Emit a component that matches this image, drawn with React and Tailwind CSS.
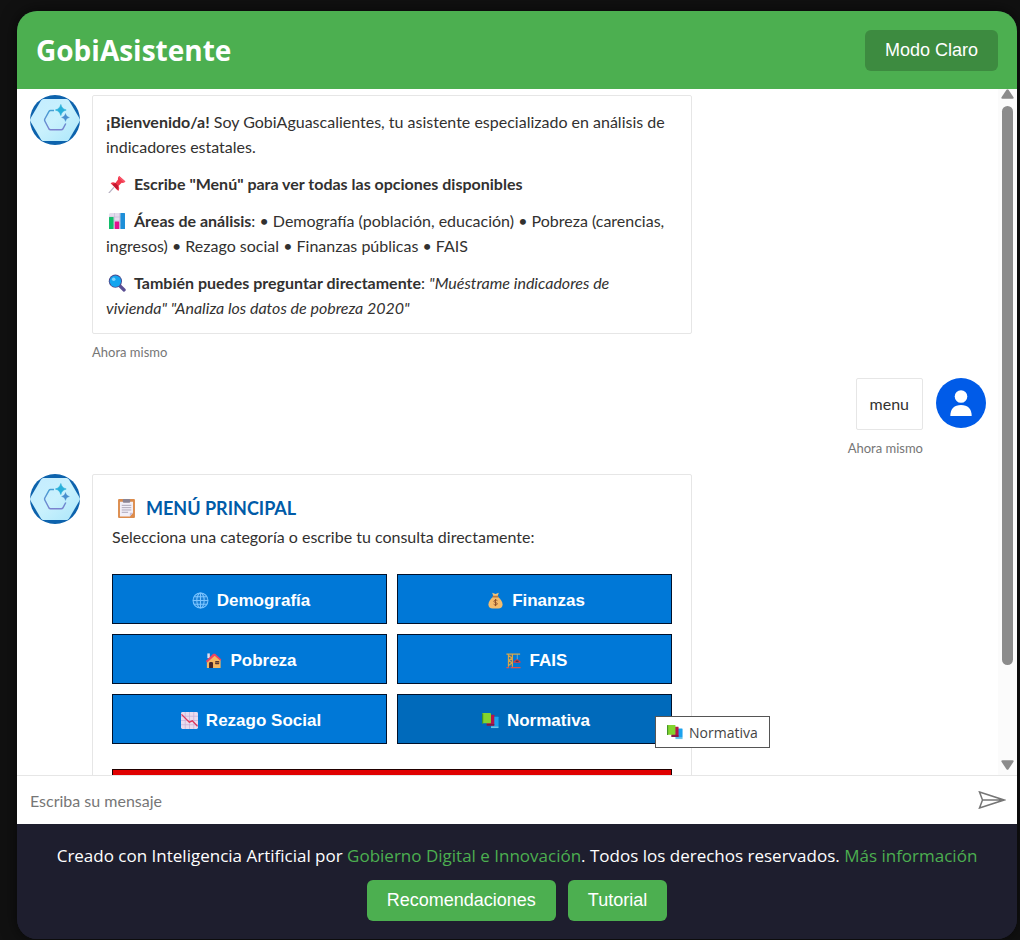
import React from "react";

const emojiArt = {
  pin: (
    <>
      <path d="M5.6 12.6 1 18" stroke="#b9b4c4" strokeWidth="1.2" strokeLinecap="round" />
      <path d="M2.6 8.2c1.9-1.3 3.3-1 4.8-.2l2.6-3.4c-.3-1.4.2-2.8 1.2-3.6L17.4 6.6c-.9 1-2.3 1.5-3.700 1.200L10.500 11c.9 1.600 1.100 3.300-.2 4.900Z" fill="#f0384c" />
      <path d="m7.400 8 3 3-1 4L4.500 9.500Z" fill="#c2182f" />
      <path d="m11.200 1 6.200 5.600-1.500.9-5.300-5Z" fill="#f8566b" />
    </>
  ),
  bars: (
    <>
      <rect x="1" y="1" width="16" height="16" rx="1.500" fill="#e4dced" />
      <path d="M1 5h16M1 9h16M1 13h16M6.500 1v16M11.500 1v16" stroke="#c5b8d6" strokeWidth=".6" />
      <rect x="1" y="5" width="4.600" height="12" rx=".6" fill="#12bd6b" />
      <rect x="6.800" y="9.500" width="4.400" height="7.500" rx=".6" fill="#e3108d" />
      <rect x="12.400" y="1" width="4.600" height="16" rx=".6" fill="#1e8fd8" />
    </>
  ),
  lens: (
    <>
      <path d="m11.500 11.500 4.600 4.500" stroke="#5b4f93" strokeWidth="3.200" strokeLinecap="round" />
      <circle cx="7.400" cy="7.200" r="6.600" fill="#4c4a8e" />
      <circle cx="7.400" cy="7.200" r="5.700" fill="#13a5ef" />
      <circle cx="5.700" cy="5.200" r="1.800" fill="#7ed3fb" />
    </>
  ),
  clipboard: (
    <>
      <path d="M2 0h14q1 0 1 1v16q0 1-1 1H2q-1 0-1-1V1q0-1 1-1Z" fill="#dc8b4b" />
      <path d="M2.800 2.500h12.400v10.500l-3 3.500H2.800Z" fill="#f2eff8" />
      <path d="M15.200 13h-3v3.500Z" fill="#c9bfd8" />
      <rect x="5.500" y="0" width="7" height="3.500" rx="1" fill="#8a8494" />
      <path d="M4.500 6h9M4.500 8.200h9M4.500 10.400h9M4.500 12.600h6" stroke="#aaa4b6" strokeWidth=".9" />
    </>
  ),
  globe: (
    <g fill="none" stroke="#7cc5ff" strokeWidth="1.100">
      <circle cx="9" cy="9" r="7.900" fill="#1a80d6" />
      <ellipse cx="9" cy="9" rx="3.900" ry="7.900" />
      <path d="M9 1v16M1 9h16M2.400 5h13.200M2.400 13h13.200" />
    </g>
  ),
  money: (
    <>
      <path d="M5.500.8 9 2l3.500-1.200-1.300 3.700H6.800Z" fill="#f3c37b" />
      <path d="M6.500 5h5c2.900 2.300 5 5.200 5 8.200 0 2.600-1.800 4.300-4.500 4.300H6c-2.700 0-4.500-1.700-4.500-4.300 0-3 2.100-5.900 5-8.200Z" fill="#f5bc6c" />
      <rect x="5.800" y="4" width="6.400" height="1.700" rx=".8" fill="#b9783f" />
      <path d="M11 9.200c-.5-.8-3.700-1-3.700.7 0 1.800 3.600.8 3.600 2.600 0 1.700-3.300 1.500-3.900.4M9 7.400v7.500" fill="none" stroke="#8c4f2b" strokeWidth="1" />
    </>
  ),
  house: (
    <>
      <rect x="2.500" y="1.500" width="2.600" height="5" fill="#e6dceb" />
      <path d="m10.500 3 6 5.500V17H2V9Z" fill="#f6b862" />
      <path d="M1 9.600 8.700 1.800h2L17.300 8l-1.100 1.200-6-5.200-7.900 7Z" fill="#ef4360" />
      <path d="M4.300 17v-5.500c0-1.200 4.200-1.200 4.200 0V17Z" fill="#46272c" />
      <rect x="10.700" y="9.500" width="4.300" height="3.400" rx=".5" fill="#553533" />
      <path d="M10.700 11.200H15" stroke="#c98843" strokeWidth=".7" />
    </>
  ),
  crane: (
    <>
      <path d="M4.600 3h2.900v12H4.600Z" fill="#66737b" opacity=".8" />
      <path d="M1.500 2.200H16M3.600 2v13.500M7.900 2v13.500M4 4l3.500 2.500L4 9l3.500 2.500L4 14" fill="none" stroke="#d8a748" strokeWidth="1.200" />
      <path d="M13 2.500V8" stroke="#7cc0d6" strokeWidth=".8" />
      <path d="m9 10 3.700-2.700L16.500 10v1.500H9Z" fill="#e5383f" />
      <rect x="11.300" y="9" width="3" height="1.600" fill="#493b4e" />
      <path d="M1.500 16.500h3M6 16.500h10.500" stroke="#e4504c" strokeWidth="1.200" />
    </>
  ),
  decline: (
    <>
      <rect x="0" y="0" width="18" height="18" rx="1.500" fill="#e9dcee" />
      <path d="M0 4.500h18M0 9h18M0 13.500h18M4.500 0v18M9 0v18M13.500 0v18" stroke="#c8b1d8" strokeWidth=".8" />
      <path d="m.5 2.500 8.300 8.300L12 9.300l5.500 5.700" fill="none" stroke="#dc365b" strokeWidth="1.400" />
    </>
  ),
  books: (
    <>
      <rect x="9.500" y="5" width="8" height="10.500" rx=".5" fill="#1ba2ee" />
      <path d="M9.500 15.300h8V17h-8Z" fill="#6bc5e8" />
      <rect x="5" y="3" width="8" height="11.500" rx=".5" fill="#b5144a" />
      <path d="M5 12.800h8v1.500H5Z" fill="#6c214b" />
      <rect x="0" y="1" width="9.500" height="11" rx=".5" fill="#83d42e" />
      <path d="M0 1.500h1.300v11H0Z" fill="#43942a" />
    </>
  ),
};

function Emoji({ name, className }) {
  return (
    <svg viewBox="0 0 18 18" fill="none" aria-hidden="true" className={className}>
      {emojiArt[name]}
    </svg>
  );
}

function InlineEmoji({ name }) {
  return <Emoji name={name} className="mr-2 ml-0.5 inline size-[18px] align-[-3px]" />;
}

function BotAvatar() {
  return (
    <svg viewBox="0 0 50 50" aria-hidden="true" className="size-[50px] shrink-0">
      <defs>
        <clipPath id="avatar-clip">
          <circle cx="25" cy="25" r="25" />
        </clipPath>
        <linearGradient id="hex-fill" x1="0" y1="0" x2="1" y2="1">
          <stop offset="0" stopColor="#c4ecff" />
          <stop offset=".5" stopColor="#c9f1fd" />
          <stop offset="1" stopColor="#abe6fa" />
        </linearGradient>
        <linearGradient id="hex-line" x1="0" y1="0" x2="0" y2="1">
          <stop offset="0" stopColor="#469fd4" />
          <stop offset="1" stopColor="#7b83cf" />
        </linearGradient>
      </defs>
      <g clipPath="url(#avatar-clip)">
        <rect width="50" height="50" fill="#0d63ad" />
        <path d="M13.500 4h23q1.600 0 2.500 1.500L49.700 23.700q.6 1.300 0 2.600L39 44.500q-.9 1.500-2.500 1.500h-23q-1.600 0-2.500-1.500L.3 26.300q-.6-1.300 0-2.600L11 5.500Q11.900 4 13.500 4Z" fill="url(#hex-fill)" />
        <path d="M24 15.500h-3.500q-1 0-1.500.8L14.800 24q-.5 1 0 2l4.200 8q.5.800 1.500.8h10.800q1 0 1.500-.8l3-5.500" fill="none" stroke="url(#hex-line)" strokeWidth="1.500" />
        <path d="M30.800 9.500c1.200 3.500 2 4.300 5.400 5.500-3.400 1.200-4.200 2-5.400 5.500-1.200-3.500-2-4.300-5.400-5.500 3.400-1.200 4.200-2 5.400-5.500Z" fill="#28b0da" stroke="#28b0da" strokeWidth=".6" />
        <path d="M35.500 18.500c.8 2.500 1.400 3.100 3.900 4-2.500.8-3.100 1.400-3.900 3.900-.8-2.500-1.400-3.100-3.900-3.900 2.500-.9 3.100-1.500 3.900-4Z" fill="#4a8fcf" stroke="#4a8fcf" strokeWidth=".4" />
      </g>
    </svg>
  );
}

function UserAvatar() {
  return (
    <svg viewBox="0 0 50 50" aria-hidden="true" className="size-[50px] shrink-0">
      <circle cx="25" cy="25" r="25" fill="#005be8" />
      <circle cx="25" cy="18.500" r="6.300" fill="#fff" />
      <path d="M14.300 38c0-7.200 4-11 10.700-11s10.700 3.800 10.700 11Z" fill="#fff" />
    </svg>
  );
}

function Timestamp() {
  return <time className="mt-2 block text-[13px] leading-5 text-[#767676]">Ahora mismo</time>;
}

function Tooltip({ icon, label }) {
  return (
    <div
      role="tooltip"
      className="absolute top-[22px] left-[258px] z-10 flex h-8 items-center gap-1.5 border border-[#555] bg-white px-[11px] font-['Open_Sans',sans-serif] text-[14px] whitespace-nowrap text-[#444]"
    >
      <Emoji name={icon} className="size-4" />
      {label}
    </div>
  );
}

const categories = [
  { icon: "globe", label: "Demografía" },
  { icon: "money", label: "Finanzas" },
  { icon: "house", label: "Pobreza" },
  { icon: "crane", label: "FAIS" },
  { icon: "decline", label: "Rezago Social" },
  { icon: "books", label: "Normativa", active: true },
];

function CategoryButton({ icon, label, active }) {
  return (
    <div className="relative">
      <button
        type="button"
        className={`flex h-[50px] w-full items-center justify-center gap-2 border border-[#00112b] pt-[3px] pl-[3px] font-['Liberation_Sans',sans-serif] text-[17px] font-bold text-white ${active ? "bg-[#006abb]" : "bg-[#0078d7]"}`}
      >
        <Emoji name={icon} className="size-[17px]" />
        {label}
      </button>
      {active && <Tooltip icon={icon} label={label} />}
    </div>
  );
}

function Scrollbar() {
  return (
    <div aria-hidden="true" className="flex w-[19px] shrink-0 flex-col items-center bg-[#fbfbfb] pb-[5px]">
      <svg viewBox="0 0 13 10" className="h-2.5 w-[13px]">
        <path d="M5.500.8q1-1 2 0l5 7.400q.7 1.600-1 1.600h-10q-1.700 0-1-1.600Z" fill="#8b8b8b" />
      </svg>
      <div className="mt-[7px] flex w-[11px] grow flex-col">
        <div className="grow-[559] rounded-full bg-[#8b8b8b]" />
        <div className="grow-[95]" />
      </div>
      <svg viewBox="0 0 13 10" className="h-2.5 w-[13px]">
        <path d="M5.500 9.200q1 1 2 0l5-7.400q.7-1.600-1-1.600h-10q-1.700 0-1 1.600Z" fill="#8b8b8b" />
      </svg>
    </div>
  );
}

export default function App() {
  return (
    <div className="h-screen min-h-[600px] bg-[#111] pt-[11px] pr-[3px] pb-px pl-[17px]">
      <div className="flex h-full flex-col overflow-hidden rounded-[20px] bg-[#1e1e2e] shadow-[0_0_16px_rgba(0,0,0,0.6)]">
        <header className="flex items-center justify-between bg-[#4caf50] px-[19px] py-[18px]">
          <h1 className="font-['Open_Sans',sans-serif] text-[28px] leading-[42px] font-bold text-white">GobiAsistente</h1>
          <button
            type="button"
            className="rounded-md bg-[#3d8b40] px-5 py-2 font-['Liberation_Sans',sans-serif] text-[18px] leading-[25px] text-white"
          >
            Modo Claro
          </button>
        </header>

        <main className="flex min-h-0 flex-1 bg-white font-['Lato',sans-serif] text-[#323130]">
          <div className="flex min-w-0 flex-1 flex-col gap-4 overflow-hidden pt-1.5 pr-3 pl-[13px]">
            <article className="flex shrink-0 gap-3">
              <BotAvatar />
              <div className="w-full max-w-[600px]">
                <div className="flex flex-col gap-3 rounded-xs border border-[#e6e6e6] p-[13px] text-[16px] leading-[25px]">
                  <p>
                    <strong>¡Bienvenido/a!</strong> Soy GobiAguascalientes, tu asistente especializado en análisis de
                    indicadores estatales.
                  </p>
                  <p>
                    <InlineEmoji name="pin" />
                    <strong>Escribe "Menú" para ver todas las opciones disponibles</strong>
                  </p>
                  <p>
                    <InlineEmoji name="bars" />
                    <strong>Áreas de análisis</strong>: • Demografía (población, educación) • Pobreza (carencias,
                    ingresos) • Rezago social • Finanzas públicas • FAIS
                  </p>
                  <p>
                    <InlineEmoji name="lens" />
                    <strong>También puedes preguntar directamente</strong>:{" "}
                    <em>
                      "Muéstrame indicadores de
                      <br />
                      vivienda" "Analiza los datos de pobreza 2020"
                    </em>
                  </p>
                </div>
                <Timestamp />
              </div>
            </article>

            <article className="flex shrink-0 justify-end gap-[13px]">
              <div className="flex flex-col items-end">
                <p className="rounded-xs border border-[#e6e6e6] p-[13px] text-[16px] leading-6">menu</p>
                <Timestamp />
              </div>
              <UserAvatar />
            </article>

            <article className="flex shrink-0 gap-3">
              <BotAvatar />
              <div className="w-full max-w-[600px] rounded-xs border border-[#e6e6e6] p-[19px]">
                <h2 className="flex items-center gap-2.5 pl-[5px] text-[18px] leading-7 font-bold text-[#005ba8]">
                  <Emoji name="clipboard" className="size-[19px]" />
                  MENÚ PRINCIPAL
                </h2>
                <p className="mt-0.5 text-[16px] leading-[25px]">
                  Selecciona una categoría o escribe tu consulta directamente:
                </p>
                <div className="mt-[25px] grid grid-cols-2 gap-2.5">
                  {categories.map((category) => (
                    <CategoryButton key={category.label} {...category} />
                  ))}
                </div>
                <button type="button" aria-label="Salir" className="mt-[25px] block h-[50px] w-full border border-[#200000] bg-[#e00000]" />
              </div>
            </article>
          </div>
          <Scrollbar />
        </main>

        <form
          className="flex h-[49px] shrink-0 items-center border-t border-[#e6e6e6] bg-white pr-[11px] pl-[13px]"
          onSubmit={(event) => event.preventDefault()}
        >
          <input
            type="text"
            aria-label="Escriba su mensaje"
            placeholder="Escriba su mensaje"
            className="h-full min-w-0 flex-1 bg-transparent font-['Lato',sans-serif] text-[16px] text-[#323130] outline-none placeholder:text-[#767676]"
          />
          <button type="submit" aria-label="Enviar">
            <svg viewBox="0 0 28 18" fill="none" stroke="#767676" strokeWidth="1.500" strokeLinejoin="miter" className="h-[18px] w-7">
              <path d="M1.500 1 26 9 1.500 17 4.500 9ZM4.500 9H26" />
            </svg>
          </button>
        </form>

        <footer className="flex flex-col items-center gap-2.5 bg-[#1e1e2e] px-4 py-[18px]">
          <p className="text-center font-['Open_Sans',sans-serif] text-[17px] leading-7 text-white">
            Creado con Inteligencia Artificial por{" "}
            <a href="#gobierno" className="text-[#4caf50]">Gobierno Digital e Innovación</a>. Todos los derechos
            reservados.{" "}
            <a href="#informacion" className="text-[#4caf50]">Más información</a>
          </p>
          <div className="flex gap-3 font-['Liberation_Sans',sans-serif] text-[18px] leading-[25px] text-white">
            <button type="button" className="rounded-md bg-[#4caf50] px-5 py-2">Recomendaciones</button>
            <button type="button" className="rounded-md bg-[#4caf50] px-5 py-2">Tutorial</button>
          </div>
        </footer>
      </div>
    </div>
  );
}
